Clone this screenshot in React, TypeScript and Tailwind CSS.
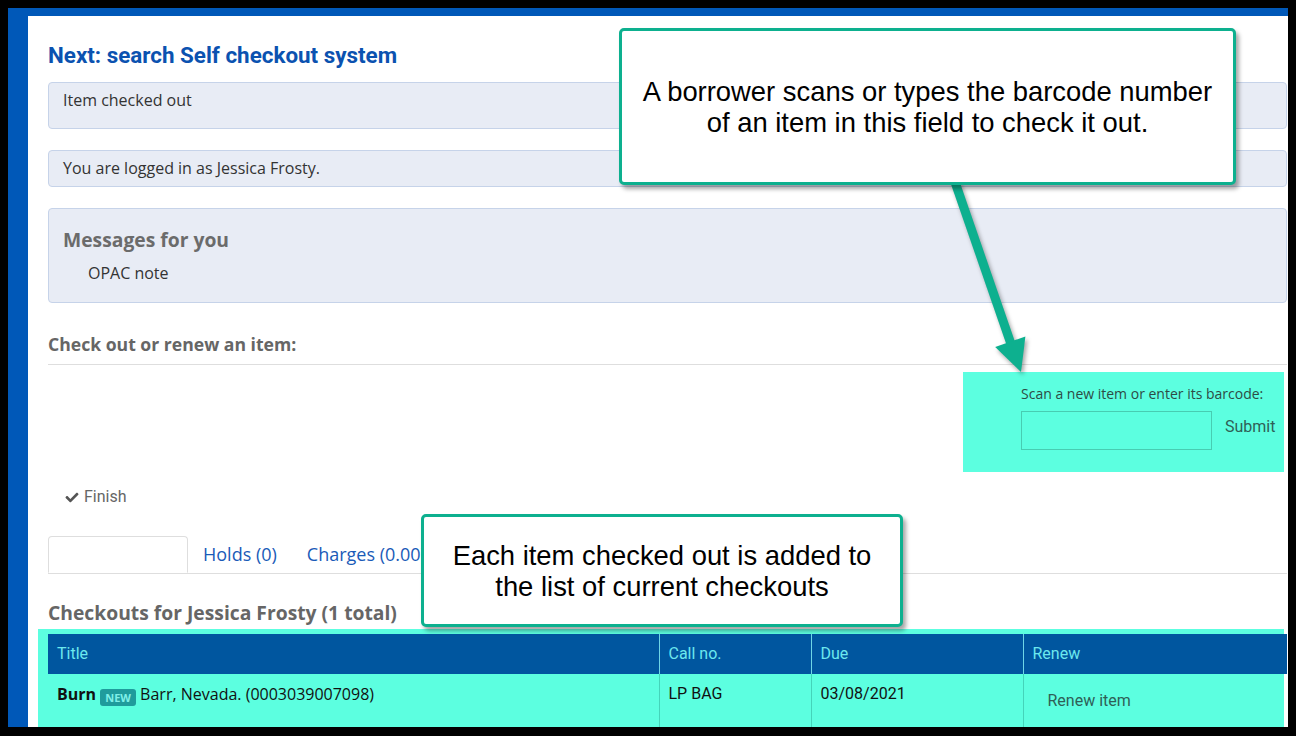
import type { ReactNode } from "react";

function CheckIcon() {
  return (
    <svg viewBox="0 0 512 512" className="h-[13px] w-[14px] fill-[#555]" aria-hidden="true">
      <path d="M173.898 439.404l-166.4-166.4c-9.997-9.997-9.997-26.206 0-36.204l36.203-36.204c9.997-9.998 26.207-9.998 36.204 0L192 312.69 432.095 72.596c9.997-9.997 26.207-9.997 36.204 0l36.203 36.204c9.997 9.997 9.997 26.206 0 36.204l-294.4 294.401c-9.998 9.997-26.207 9.997-36.204-.001z" />
    </svg>
  );
}

function Callout({ className, children }: { className: string; children: ReactNode }) {
  return (
    <div
      className={`absolute flex items-center justify-center rounded-[5px] border-[3px] border-[#0db08f] bg-white text-center font-['Liberation_Sans',Arial,sans-serif] text-[27.4px] leading-[31px] text-black shadow-[3px_4px_4px_rgba(0,0,0,0.35)] ${className}`}
    >
      <p>{children}</p>
    </div>
  );
}

function Arrow() {
  return (
    <svg
      className="absolute left-[872px] top-[144px] h-[220px] w-[140px] drop-shadow-[2px_3px_2px_rgba(0,0,0,0.35)]"
      viewBox="0 0 140 220"
      aria-hidden="true"
    >
      <line x1="55" y1="22" x2="111" y2="184" stroke="#0db08f" strokeWidth="9" />
      <polygon points="121,212 125.4,176.5 95.2,187.1" fill="#0db08f" />
    </svg>
  );
}

const alertBox = "rounded-[4px] border border-[#c6d3e9] bg-[#e8ecf5] px-[14px]";

export default function App() {
  return (
    <div className="h-[736px] w-[1296px] overflow-hidden bg-black pt-2 pr-2 pb-[9px] pl-2">
      <div className="relative h-full overflow-hidden border-t-8 border-l-[20px] border-[#0058b8] bg-white">
        <main className="pl-5 pr-px pt-[25px] font-['Open_Sans',sans-serif] text-[#333]">
          <h1 className="h-[28px] font-['Roboto',sans-serif] text-[22.4px] font-bold leading-[28px] text-[#0b52b0]">
            Next: search Self checkout system
          </h1>

          <div className={`mt-[13px] h-[47px] pt-[6px] text-[16px] leading-[22px] ${alertBox}`}>Item checked out</div>

          <div className={`mt-[21px] h-[37px] pt-[6px] text-[16px] leading-[22px] ${alertBox}`}>
            You are logged in as Jessica Frosty.
          </div>

          <div className={`mt-[21px] h-[95px] pt-[19px] ${alertBox}`}>
            <h2 className="text-[19.3px] font-bold leading-[24px] text-[#6b6b6b]">Messages for you</h2>
            <p className="mt-[10px] pl-[25px] text-[16px] leading-[22px]">OPAC note</p>
          </div>

          <h2 className="mt-[29px] border-b border-[#dedede] pb-[8px] text-[17.6px] font-bold leading-[24px] text-[#666]">
            Check out or renew an item:
          </h2>

          <div className="mt-[7px] flex justify-end pr-[3px]">
            <form className="h-[100px] w-[321px] bg-[#5cffe0] pl-[58px] pt-[12px]">
              <label className="block text-[14px] leading-[19px] text-[#2e4b45]">
                Scan a new item or enter its barcode:
              </label>
              <div className="mt-[8px] flex items-start">
                <input
                  type="text"
                  className="h-[39px] w-[191px] border border-[#47cdb2] bg-transparent outline-none"
                />
                <span className="ml-[13px] mt-[6px] font-['Roboto',sans-serif] text-[16px] leading-[20px] text-[#2f5f57]">
                  Submit
                </span>
              </div>
            </form>
          </div>

          <div className="mt-[15px] flex h-[20px] items-center gap-[5px] pl-[17px] font-['Roboto',sans-serif] text-[16px] leading-[20px] text-[#666]">
            <CheckIcon />
            <span>Finish</span>
          </div>

          <ul className="mt-[29px] flex border-b border-[#dedede] text-[18px] leading-[24px]">
            <li className="-mb-px h-[37px] w-[140px] rounded-t-[4px] border border-[#dedede] border-b-white bg-white" />
            <li className="-mb-px border border-transparent px-[14px] pt-[5px] pb-[7px] text-[#1a5bb8]">Holds (0)</li>
            <li className="-mb-px border border-transparent px-[14px] pt-[5px] pb-[7px] text-[#1a5bb8]">Charges (0.00)</li>
          </ul>

          <h2 className="mt-[27px] text-[19.3px] font-bold leading-[24px] text-[#666]">
            Checkouts for Jessica Frosty (1 total)
          </h2>

          <div className="-ml-[10px] mr-[3px] mt-[4px] bg-[#5cffe0] pl-[10px] pt-[5px]">
            <table className="-mr-[3px] w-[calc(100%+3px)] table-fixed border-collapse">
              <colgroup>
                <col className="w-[611px]" />
                <col className="w-[152px]" />
                <col className="w-[212px]" />
                <col />
              </colgroup>
              <thead>
                <tr className="h-[40px] bg-[#00569f] text-left font-['Roboto',sans-serif] text-[16px] text-[#6ce8ee]">
                  <th className="px-[9px] font-normal">Title</th>
                  <th className="border-l border-[#6fd6e6] px-[9px] font-normal">Call no.</th>
                  <th className="border-l border-[#6fd6e6] px-[9px] font-normal">Due</th>
                  <th className="border-l border-[#6fd6e6] px-[9px] font-normal">Renew</th>
                </tr>
              </thead>
              <tbody>
                <tr className="h-[60px] align-top text-[16px] leading-[22px] text-[#111]">
                  <td className="px-[9px] pt-[9px]">
                    <span className="font-bold">Burn</span>{" "}
                    <span className="inline-block h-[17px] rounded-[3px] bg-[#1f9c9c] px-[5px] align-[-2px] text-[11px] font-bold leading-[17px] text-[#7ff0e8]">
                      NEW
                    </span>{" "}
                    Barr, Nevada. (0003039007098)
                  </td>
                  <td className="border-l border-[#44d4ba] px-[9px] pt-[9px] font-['Roboto',sans-serif]">LP BAG</td>
                  <td className="border-l border-[#44d4ba] px-[9px] pt-[9px] font-['Roboto',sans-serif]">03/08/2021</td>
                  <td className="border-l border-[#44d4ba] px-[9px] pt-[15px]">
                    <span className="pl-[15px] font-['Roboto',sans-serif] text-[#2f5f57]">Renew item</span>
                  </td>
                </tr>
              </tbody>
            </table>
          </div>
        </main>

        <Arrow />
        <Callout className="left-[591px] top-[12px] h-[157px] w-[617px]">
          A borrower scans or types the barcode number
          <br />
          of an item in this field to check it out.
        </Callout>
        <Callout className="left-[393px] top-[498px] h-[113px] w-[482px]">
          Each item checked out is added to
          <br />
          the list of current checkouts
        </Callout>
      </div>
    </div>
  );
}
